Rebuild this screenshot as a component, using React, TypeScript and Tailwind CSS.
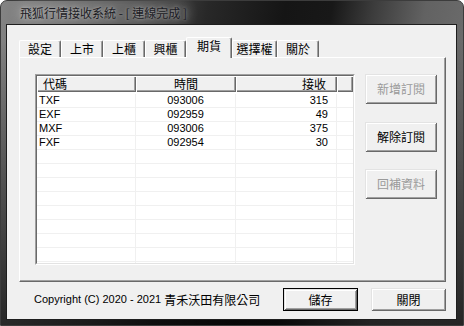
import React from "react";

const tabs = [
  { label: "設定", w: "w-[42px]" },
  { label: "上市", w: "w-[42px]" },
  { label: "上櫃", w: "w-[42px]" },
  { label: "興櫃", w: "w-[41px]" },
  { label: "期貨", w: "w-[46px]", active: true },
  { label: "選擇權", w: "w-[45px]" },
  { label: "關於", w: "w-[42px]" },
];

const rows = [
  { code: "TXF", time: "093006", count: "315" },
  { code: "EXF", time: "092959", count: "49" },
  { code: "MXF", time: "093006", count: "375" },
  { code: "FXF", time: "092954", count: "30" },
];

const btn3d =
  "bg-[#f0f0f0] shadow-[inset_1px_1px_#e3e3e3,inset_-1px_-1px_#696969,inset_2px_2px_#fff,inset_-2px_-2px_#a0a0a0]";

const SideButton = ({ label, disabled }: { label: string; disabled?: boolean }) => (
  <div
    className={`w-[72px] h-[30px] flex items-center justify-center text-[12px] ${btn3d} ${
      disabled ? "text-[#9a9a9a]" : "text-black"
    }`}
  >
    {label}
  </div>
);

const HeaderCell = ({ children, className }: { children?: React.ReactNode; className: string }) => (
  <div
    className={`h-full flex items-center bg-[#f0f0f0] shadow-[inset_1px_1px_#fff,inset_-1px_-1px_#696969,inset_-2px_-2px_#a0a0a0] ${className}`}
  >
    {children}
  </div>
);

const QuoteList = () => {
  const empty = Array.from({ length: 9 });
  return (
    <div className="w-[320px] h-[191px] border border-t-[#a0a0a0] border-l-[#a0a0a0] border-b-white border-r-white">
      <div className="w-full h-full border border-t-[#696969] border-l-[#696969] border-b-[#e3e3e3] border-r-[#e3e3e3] bg-white overflow-hidden">
        <div className="flex h-[16px] text-[12px] text-black">
          <HeaderCell className="w-[99px] pl-[6px]">代碼</HeaderCell>
          <HeaderCell className="w-[100px] justify-center">時間</HeaderCell>
          <HeaderCell className="w-[101px] justify-end pr-[11px]">接收</HeaderCell>
          <HeaderCell className="flex-1" />
        </div>
        <div className="pt-[2px] font-['Liberation_Sans',sans-serif] text-[11px] text-black">
          {rows.map((r) => (
            <div key={r.code} className="flex h-[14px] border-b border-[#f0f0f0]">
              <div className="w-[99px] pl-[2px] border-r border-[#f0f0f0] leading-[13px]">{r.code}</div>
              <div className="w-[100px] text-center border-r border-[#f0f0f0] leading-[13px]">{r.time}</div>
              <div className="w-[101px] text-right pr-[8px] border-r border-[#f0f0f0] leading-[13px]">{r.count}</div>
              <div className="flex-1" />
            </div>
          ))}
          {empty.map((_, i) => (
            <div key={i} className="flex h-[14px] border-b border-[#f0f0f0]">
              <div className="w-[99px] border-r border-[#f0f0f0]" />
              <div className="w-[100px] border-r border-[#f0f0f0]" />
              <div className="w-[101px] border-r border-[#f0f0f0]" />
              <div className="flex-1" />
            </div>
          ))}
        </div>
      </div>
    </div>
  );
};

export default function App() {
  return (
    <div className="w-[464px] h-[326px] bg-white">
      <div className="w-[464px] h-[326px] flex flex-col rounded-t-[7px] border border-[#3c3c3c] bg-[linear-gradient(to_bottom,rgba(0,0,0,0)_0%,rgba(0,0,0,0)_12%,rgba(0,0,0,0.65)_100%),linear-gradient(100deg,#848484_0%,#6c6c6c_14%,#4c4c4c_28%,#282828_40%,#151515_55%,#181818_64%,#3c3c3c_72%,#626262_82%,#6c6c6c_92%,#6a6a6a_100%)] font-['Liberation_Sans','Noto_Sans_CJK_TC',sans-serif]">
        <div className="h-[23px] flex items-center pl-[19px]">
          <span className="text-[12px] text-[#1c1c24] rounded-[8px] bg-[rgba(255,255,255,0.1)] shadow-[0_0_8px_5px_rgba(255,255,255,0.1)] [text-shadow:0_0_3px_rgba(255,255,255,0.4),0_0_7px_rgba(255,255,255,0.3)] font-['Noto_Sans_CJK_TC',sans-serif]">
            飛狐行情接收系統 - [ 連線完成 ]
          </span>
        </div>
        <div className="flex-1 flex pl-[5px] pr-[6px] pb-[5px]">
          <div className="flex-1 border border-[#1e1e1e] bg-[#f0f0f0] pt-[12px] pl-[12px] pr-[10px] flex flex-col font-['Noto_Sans_CJK_TC',sans-serif]">
            <div className="flex items-end h-[20px]">
              {tabs.map((t) =>
                t.active ? (
                  <div
                    key={t.label}
                    className={`${t.w} h-[21px] -mb-px relative z-10 bg-[#f0f0f0] border-t border-l border-r border-t-white border-l-white border-r-[#696969] rounded-t-[2px] shadow-[inset_-1px_0_#a0a0a0] flex justify-center pt-[1px] text-[12px] leading-[14px] text-black`}
                  >
                    {t.label}
                  </div>
                ) : (
                  <div
                    key={t.label}
                    className={`${t.w} h-[17px] bg-[#f0f0f0] border-t border-l border-r border-t-white border-l-white border-r-[#696969] rounded-t-[2px] shadow-[inset_-1px_0_#a0a0a0] flex items-center justify-center text-[12px] text-black`}
                  >
                    {t.label}
                  </div>
                )
              )}
            </div>
            <div className="h-[225px] border border-t-white border-l-white border-r-[#696969] border-b-[#696969] shadow-[inset_-1px_-1px_#a0a0a0] flex pl-[15px] pt-[16px]">
              <QuoteList />
              <div className="ml-[10px] flex flex-col">
                <SideButton label="新增訂閱" disabled />
                <div className="mt-[18px]">
                  <SideButton label="解除訂閱" />
                </div>
                <div className="mt-[17px]">
                  <SideButton label="回補資料" disabled />
                </div>
              </div>
            </div>
            <div className="mt-[6px] h-[23px] flex items-center">
              <div className="ml-[15px] flex items-center text-black">
                <span className="font-['Liberation_Sans',sans-serif] text-[11px]">Copyright (C) 2020 - 2021&nbsp;</span>
                <span className="text-[12px]">青禾沃田有限公司</span>
              </div>
              <div className="ml-auto flex gap-[13px]">
                <div className="w-[75px] h-[23px] border border-black">
                  <div className={`w-full h-full flex items-center justify-center text-[12px] text-black ${btn3d}`}>儲存</div>
                </div>
                <div className={`w-[75px] h-[23px] flex items-center justify-center text-[12px] text-black ${btn3d}`}>關閉</div>
              </div>
            </div>
          </div>
        </div>
      </div>
    </div>
  );
}
